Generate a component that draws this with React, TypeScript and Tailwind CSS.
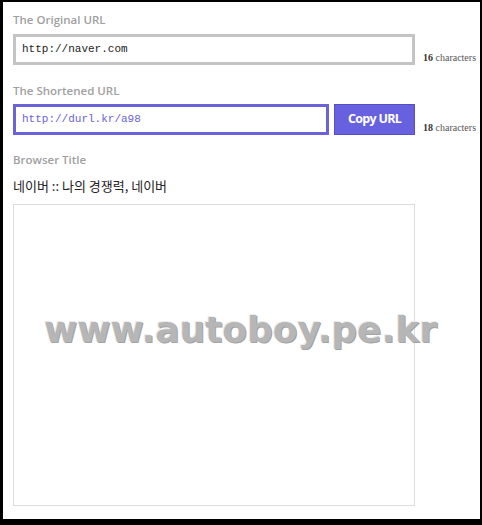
const LABEL = "text-[11.5px] leading-[16px] font-semibold text-[#a0a0a0] [font-family:'Open_Sans',sans-serif]";
const COUNT = "text-[10px] leading-[12px] text-[#555] [font-family:'Liberation_Serif',serif]";
const MONO = "text-[11px] [font-family:'Courier_New','Liberation_Mono',monospace]";

function CharCount({ n }: { n: number }) {
  return (
    <span className={`${COUNT} self-end mb-[1px] whitespace-nowrap`}>
      <b className="font-bold text-[#333]">{n}</b> characters
    </span>
  );
}

export default function App() {
  const original = "http://naver.com";
  const short = "http://durl.kr/a98";

  return (
    <div className="h-[525px] w-[482px] border-t-2 border-r-2 border-b-[6px] border-l-[3px] border-black bg-white">
      <div className="flex flex-col pl-[10px] pt-[10px]">
        <label className={LABEL}>The Original URL</label>
        <div className="mt-[6px] flex items-stretch gap-[8px]">
          <div className="flex h-[31px] w-[402px] items-center border-[3px] border-[#c4c4c4] px-[6px]">
            <span className={`${MONO} text-[#222]`}>{original}</span>
          </div>
          <CharCount n={original.length} />
        </div>

        <label className={`${LABEL} mt-[18px]`}>The Shortened URL</label>
        <div className="mt-[5px] flex items-stretch">
          <div className="flex h-[31px] w-[316px] items-center border-[3px] border-[#6a63d9] px-[6px]">
            <span className={`${MONO} text-[#6a63d9]`}>{short}</span>
          </div>
          <button
            type="button"
            className="ml-[5px] h-[31px] w-[81px] border border-[#5750c4] bg-[#6861df] text-[12.5px] font-bold tracking-[-0.7px] text-white [font-family:'Open_Sans',sans-serif]"
          >
            Copy URL
          </button>
          <span className="ml-[8px] flex">
            <CharCount n={short.length} />
          </span>
        </div>

        <label className={`${LABEL} mt-[17px]`}>Browser Title</label>
        <div className="mt-[9px] text-[13px] leading-[18px] text-[#222] [font-family:'Noto_Sans_CJK_KR',sans-serif]">
          네이버 :: 나의 경쟁력, 네이버
        </div>

        <div className="relative mt-[9px] h-[302px] w-[402px] border border-[#dcdcdc]">
          <span className="absolute left-[30px] top-[98px] whitespace-nowrap text-[36px] font-bold text-[#b6b6b6] [font-family:'DejaVu_Sans',sans-serif] [text-shadow:1px_1px_0_#a3a3a3,-1px_-1px_0_#ececec]">
            www.autoboy.pe.kr
          </span>
        </div>
      </div>
    </div>
  );
}
